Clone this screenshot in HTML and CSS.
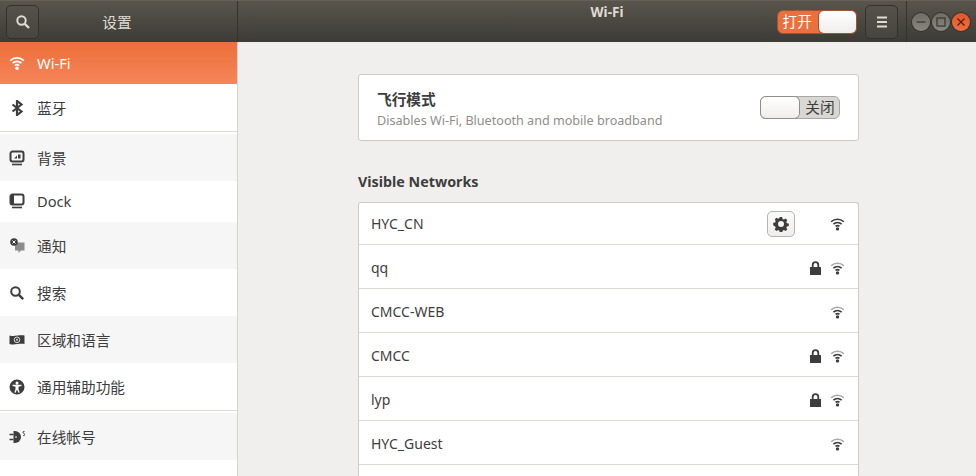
FILE: index.html
```html
<!DOCTYPE html>
<html lang="zh-CN">
<head>
  <meta charset="UTF-8" />
  <title>设置 - Wi-Fi</title>
  <link rel="stylesheet" href="styles.css">
</head>
<body>
<svg class="defs" width="0" height="0">
  <symbol id="wifi" viewBox="0 0 16 14">
    <path class="arc arc-outer" d="M1.200 4.600a10 10 0 0 1 13.600 0" />
    <path class="arc" d="M3.600 7.200a6.600 6.600 0 0 1 8.800 0" />
    <path class="arc" d="M5.900 9.600a3.200 3.200 0 0 1 4.200 0" />
    <circle class="arc-dot" cx="8" cy="12.200" r="1.800" />
  </symbol>
  <symbol id="lock" viewBox="0 0 13 14">
    <path d="M2.800 6V4a3.700 3.700 0 0 1 7.400 0v2h1.800v8H1V6zm1.800 0h3.800V4a1.900 1.900 0 0 0-3.800 0z" fill="#3d3d3d" fill-rule="evenodd" />
  </symbol>
</svg>

<header class="titlebar">
  <div class="titlebar-left">
    <button class="hbtn">
      <svg width="16" height="16" viewBox="0 0 16 16"><circle cx="6.500" cy="6.500" r="4.200" fill="none" stroke="#dfdbd2" stroke-width="2" /><path d="M9.800 9.800l4.200 4.200" stroke="#dfdbd2" stroke-width="2.400" /></svg>
    </button>
    <div class="titlebar-name">设置</div>
  </div>
  <div class="titlebar-main">
    <div></div>
    <div class="titlebar-title">Wi-Fi</div>
    <div class="titlebar-controls">
      <div class="switch-on"><span class="switch-on-label">打开</span><span class="knob"></span></div>
      <button class="hbtn">
        <svg width="16" height="16" viewBox="0 0 16 16"><path d="M3 3.500h10M3 8h10M3 12.500h10" stroke="#dfdbd2" stroke-width="2" /></svg>
      </button>
      <div class="window-btns">
        <span class="wbtn"><svg width="18" height="18" viewBox="0 0 18 18"><path d="M4.500 9h9" stroke="#38362f" stroke-width="1.200" /></svg></span>
        <span class="wbtn"><svg width="18" height="18" viewBox="0 0 18 18"><rect x="5" y="5" width="8" height="8" fill="none" stroke="#38362f" stroke-width="1.200" /></svg></span>
        <span class="wbtn wbtn-close"><svg width="18" height="18" viewBox="0 0 18 18"><path d="M5.500 5.500l7 7M12.500 5.500l-7 7" stroke="#4a2412" stroke-width="1.300" /></svg></span>
      </div>
    </div>
  </div>
</header>

<div class="content">
  <nav class="sidebar">
    <div class="item active h42">
      <svg class="item-icon" viewBox="0 0 16 14"><use href="#wifi" /></svg><span>Wi-Fi</span>
    </div>
    <div class="item h47">
      <svg class="item-icon" viewBox="0 0 16 16"><path d="M3.500 4.500l9 7L8 15V1l4.500 3.500-9 7" fill="none" stroke="#3d3d3d" stroke-width="2.200" /></svg><span>蓝牙</span>
    </div>
    <div class="sep"></div>
    <div class="item alt h47">
      <svg class="item-icon" viewBox="0 0 16 16"><path d="M3.500 1.500h9a2 2 0 0 1 2 2v6a2 2 0 0 1-2 2h-9a2 2 0 0 1-2-2v-6a2 2 0 0 1 2-2z" fill="none" stroke="#3d3d3d" stroke-width="2" /><path d="M3 14.500h10" stroke="#3d3d3d" stroke-width="1.600" /><path d="M5 8.500l3-3v3zM9 4.500h2.500v4H9z" fill="#3d3d3d" /></svg><span>背景</span>
    </div>
    <div class="item h41">
      <svg class="item-icon" viewBox="0 0 16 16"><path d="M3.500 1.500h9a2 2 0 0 1 2 2v6a2 2 0 0 1-2 2h-9a2 2 0 0 1-2-2v-6a2 2 0 0 1 2-2z" fill="none" stroke="#3d3d3d" stroke-width="2" /><path d="M3 14.500h10" stroke="#3d3d3d" stroke-width="1.600" /><path d="M2 2h3v9H2z" fill="#3d3d3d" /></svg><span>Dock</span>
    </div>
    <div class="item alt h47">
      <svg class="item-icon" viewBox="0 0 16 16"><path d="M6 4.500h9.500v8H12L9.500 15v-2.500H6z" fill="#8c8c8c" /><circle cx="5" cy="4" r="3.800" fill="#3d3d3d" /><path d="M3.500 2.500l3 3M6.500 2.500l-3 3" stroke="#fff" stroke-width="1" /></svg><span>通知</span>
    </div>
    <div class="item h47">
      <svg class="item-icon" viewBox="0 0 16 16"><circle cx="6.500" cy="6.500" r="4.300" fill="none" stroke="#3d3d3d" stroke-width="2" /><path d="M9.800 9.800l4.400 4.400" stroke="#3d3d3d" stroke-width="2.400" /></svg><span>搜索</span>
    </div>
    <div class="item alt h47">
      <svg class="item-icon" viewBox="0 0 16 16"><path d="M.500 3.500c5 1.500 10-1 15 0v8.500c-5-1-10 1.500-15 0z" fill="#3d3d3d" /><circle cx="8" cy="7.800" r="2.800" fill="none" stroke="#ddd" stroke-width="1" /><circle cx="8" cy="7.800" r="1" fill="#ddd" /></svg><span>区域和语言</span>
    </div>
    <div class="item h47">
      <svg class="item-icon" viewBox="0 0 16 16"><path fill-rule="evenodd" d="M8 .500a7.500 7.500 0 1 1 0 15 7.500 7.500 0 0 1 0-15zM8 2.600a1.500 1.500 0 1 0 0 3 1.500 1.500 0 0 0 0-3zM3.500 5.800v1.300l3 .700v2.200L5.300 13.400l1.300.400L8 10.600l1.400 3.200 1.300-.400-1.200-3.400V7.800l3-.700V5.800z" fill="#3d3d3d" /></svg><span>通用辅助功能</span>
    </div>
    <div class="sep"></div>
    <div class="item alt h47">
      <svg class="item-icon" viewBox="0 0 16 16"><path d="M4.500 2h1.500a6 6 0 0 1 0 12H4.500z" fill="#3d3d3d" /><path d="M.500 5.500h4M.500 10.500h4" stroke="#3d3d3d" stroke-width="1.500" /><path d="M8 8h-2" stroke="#f6f6f6" stroke-width="1.200" /><path d="M15.500 2.500c-2-.500-2 1.500-.500 2s1 2.500-.800 2" fill="none" stroke="#3d3d3d" stroke-width="1" /></svg><span>在线帐号</span>
    </div>
  </nav>

  <main class="panel">
    <section class="card airplane">
      <div class="airplane-text">
        <div class="airplane-title">飞行模式</div>
        <div class="airplane-sub">Disables Wi-Fi, Bluetooth and mobile broadband</div>
      </div>
      <div class="switch-off"><span class="knob"></span><span class="switch-off-label">关闭</span></div>
    </section>

    <h2 class="section-title">Visible Networks</h2>

    <section class="card networks">
      <div class="net net-first">
        <span class="net-name">HYC_CN</span>
        <button class="gear">
          <svg width="16" height="16" viewBox="0 0 16 16"><path fill="#3d3d3d" fill-rule="evenodd" d="M6.800 1h2.400l.4 1.900 1.300.6 1.700-1 1.700 1.700-1 1.700.6 1.300 1.900.4v2.400l-1.900.4-.6 1.300 1 1.700-1.700 1.700-1.700-1-1.300.6-.4 1.900H6.800l-.4-1.900-1.300-.6-1.700 1-1.700-1.700 1-1.700-.6-1.300L.2 9.200V6.800l1.900-.4.600-1.300-1-1.700 1.700-1.700 1.700 1 1.300-.6zM8 5a3 3 0 1 0 0 6 3 3 0 0 0 0-6z" /></svg>
        </button>
        <svg class="net-wifi"><use href="#wifi" /></svg>
      </div>
      <div class="net">
        <span class="net-name">qq</span>
        <svg class="net-lock"><use href="#lock" /></svg>
        <svg class="net-wifi weak"><use href="#wifi" /></svg>
      </div>
      <div class="net">
        <span class="net-name">CMCC-WEB</span>
        <svg class="net-wifi weak"><use href="#wifi" /></svg>
      </div>
      <div class="net">
        <span class="net-name">CMCC</span>
        <svg class="net-lock"><use href="#lock" /></svg>
        <svg class="net-wifi weak"><use href="#wifi" /></svg>
      </div>
      <div class="net">
        <span class="net-name">lyp</span>
        <svg class="net-lock"><use href="#lock" /></svg>
        <svg class="net-wifi weak"><use href="#wifi" /></svg>
      </div>
      <div class="net">
        <span class="net-name">HYC_Guest</span>
        <svg class="net-wifi weak"><use href="#wifi" /></svg>
      </div>
      <div class="net"></div>
    </section>
  </main>
</div>
</body>
</html>
```

FILE: styles.css
```css
* {
  box-sizing: border-box;
}
html, body {
  height: 100%;
}
body {
  margin: 0;
  overflow: hidden;
  display: flex;
  flex-direction: column;
  font-family: "Noto Sans", "Noto Sans CJK SC", sans-serif;
  font-size: 14.67px;
  color: #3d3d3d;
  background: #f1efed;
}
.defs {
  position: absolute;
}

/* title bar */
.titlebar {
  display: flex;
  height: 42px;
  flex: none;
  background: linear-gradient(to bottom, #59554c, #3c3b37);
  border-top: 1px solid #65615a;
  color: #dfdbd2;
}
.titlebar-left {
  width: 238px;
  flex: none;
  display: flex;
  align-items: center;
  padding-left: 6px;
  border-right: 1px solid #34332e;
}
.titlebar-name {
  flex: 1;
  text-align: center;
  padding-right: 46px;
  margin-left: 4px;
}
.titlebar-main {
  flex: 1;
  display: grid;
  grid-template-columns: 1fr auto 1fr;
  align-items: center;
}
.titlebar-title {
  align-self: start;
  font-weight: 700;
  font-size: 13.5px;
  line-height: 23px;
}
.titlebar-controls {
  display: flex;
  align-items: center;
  justify-content: flex-end;
}
.hbtn {
  width: 33px;
  height: 34px;
  padding: 0;
  display: flex;
  align-items: center;
  justify-content: center;
  background: linear-gradient(to bottom, #55524a, #47453f);
  border: 1px solid #33322d;
  border-radius: 5px;
}
.switch-on {
  width: 80px;
  height: 24px;
  display: flex;
  margin-right: 8px;
  background: #e9703f;
  border: 1px solid #a5522f;
  border-radius: 6px;
  color: #fff;
}
.switch-on-label {
  width: 39px;
  margin-right: 2px;
  text-align: center;
  line-height: 21px;
}
.knob {
  width: 38px;
  background: linear-gradient(to bottom, #ffffff, #f0eeec);
  border-radius: 5px;
}
.switch-on .knob {
  box-shadow: 0 0 0 1px #a5522f;
}
.window-btns {
  display: flex;
  gap: 2px;
  margin-left: 8px;
  padding-left: 5px;
  padding-right: 6px;
  height: 41px;
  align-items: center;
  border-left: 1px solid #34332e;
}
.wbtn {
  width: 18px;
  height: 18px;
  border-radius: 50%;
  background: linear-gradient(to bottom, #6f6c65, #8a8780);
  box-shadow: 0 0 0 1px #33322d;
}
.wbtn-close {
  background: linear-gradient(to bottom, #e5542a, #f0703c);
}
.wbtn svg {
  display: block;
}

/* sidebar */
.content {
  flex: 1;
  display: flex;
  min-height: 0;
}
.sidebar {
  width: 238px;
  flex: none;
  background: #fff;
  border-right: 1px solid #d5d3d0;
}
.item {
  display: flex;
  align-items: center;
  gap: 12px;
  padding-left: 9px;
}
.item-icon {
  width: 16px;
  height: 16px;
  flex: none;
}
.h42 { height: 42px; }
.h41 { height: 41px; padding-bottom: 2px; }
.h47 { height: 47px; }
.alt {
  background: #f6f6f6;
}
.active {
  background: linear-gradient(to bottom, #ec6f39, #f6855a);
  color: #fff;
}
.sep {
  height: 3px;
  border-top: 1px solid #dcdad7;
  background: #fff;
}

/* wifi icon pieces */
.arc {
  fill: none;
  stroke: currentColor;
  stroke-width: 1.8;
}
.arc-outer {
  stroke: var(--outer-arc, currentColor);
}
.arc-dot {
  fill: currentColor;
}
.net-wifi {
  width: 15px;
  height: 14px;
  flex: none;
  color: #3d3d3d;
  margin-left: 8px;
  margin-right: 13px;
}
.weak {
  --outer-arc: #a8a8a8;
}

/* main panel */
.panel {
  flex: 1;
  padding: 32px 117px 0 120px;
  min-width: 0;
}
.card {
  background: #fff;
  border: 1px solid #cdcbc7;
  border-radius: 3px;
}
.airplane {
  height: 67px;
  display: flex;
  align-items: center;
  justify-content: space-between;
  padding: 0 18px;
}
.airplane-text {
  padding-top: 4px;
}
.airplane-title {
  font-weight: 700;
  line-height: 20px;
}
.airplane-sub {
  margin-top: 2px;
  font-size: 12.6px;
  color: #8f8d89;
  line-height: 20px;
}
.switch-off {
  width: 80px;
  height: 23px;
  display: flex;
  margin-right: 0;
  background: #d9d7d3;
  border: 1px solid #a8a6a2;
  border-radius: 6px;
}
.switch-off .knob {
  box-shadow: 0 0 0 1px #8f8d89;
}
.switch-off-label {
  flex: 1;
  padding-left: 2px;
  text-align: center;
  line-height: 21px;
}
.section-title {
  margin: 31px 0 10px;
  font-size: 14.3px;
  line-height: 20px;
  font-weight: 700;
}
.networks {
  border-bottom: none;
}
.net {
  height: 44px;
  display: flex;
  align-items: center;
  padding: 2px 0 0 12px;
  border-bottom: 1px solid #dcdad7;
}
.net-first {
  height: 42px;
  padding-top: 0;
}
.net-name {
  flex: 1;
  font-size: 14px;
}
.net-lock {
  width: 13px;
  height: 14px;
  flex: none;
}
.gear {
  width: 28px;
  height: 26px;
  padding: 0;
  margin-right: 27px;
  display: flex;
  align-items: center;
  justify-content: center;
  background: linear-gradient(to bottom, #fbfbfa, #eeedeb);
  border: 1px solid #b6b4b0;
  border-radius: 5px;
}
```
